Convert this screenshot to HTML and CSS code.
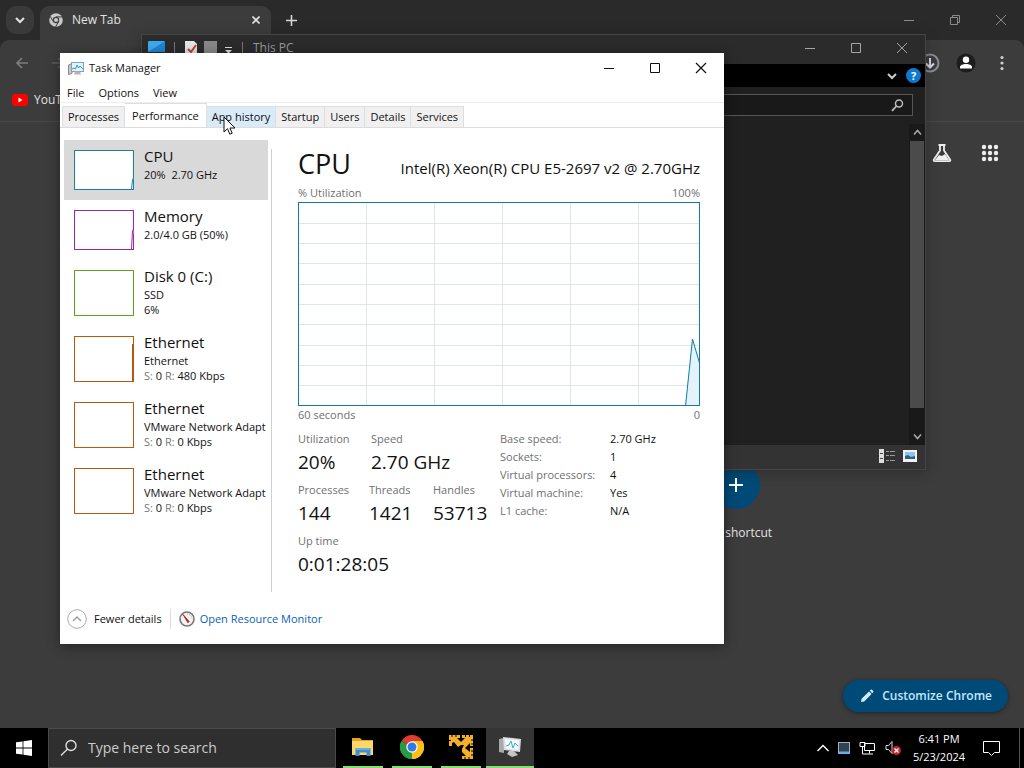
FILE: index.html
```html
<!DOCTYPE html>
<html lang="en">
<head>
<meta charset="utf-8">
<title>Task Manager</title>
<link rel="stylesheet" href="styles.css">
</head>
<body>
<div class="screen">
<div class="desktop">

<section class="chrome" aria-label="Browser">
  <header class="chrome-tabs">
    <button class="tab-search" aria-label="Search tabs"><svg width="10" height="8" viewBox="0 0 10 8"><path d="M1 2l4 4 4-4" fill="none" stroke="#e3e3e3" stroke-width="2"/></svg></button>
    <div class="chrome-tab">
      <svg width="14" height="14" viewBox="0 0 14 14"><circle cx="7" cy="7" r="6.8" fill="#c7c7c7"/><circle cx="7" cy="7" r="3.2" fill="#3c3c3c"/><circle cx="7" cy="7" r="2.1" fill="#c7c7c7"/><path d="M7 3.9h6.2M4.4 8.6L1.2 3.4M9.6 8.6L6.6 13.8" stroke="#3c3c3c"/></svg>
      <span class="chrome-tab-name">New Tab</span>
      <button class="tab-close" aria-label="Close tab"><svg width="8" height="8" viewBox="0 0 8 8"><path d="M.5.5l7 7M7.5.5l-7 7" stroke="#e3e3e3" stroke-width="1.6"/></svg></button>
    </div>
    <button class="tab-new" aria-label="New tab"><svg width="11" height="11" viewBox="0 0 11 11"><path d="M5.500 0v11M0 5.500h11" stroke="#d5d5d5" stroke-width="1.600"/></svg></button>
    <div class="win-buttons dim">
      <button aria-label="Minimize"><svg width="12" height="12" viewBox="0 0 12 12"><path d="M1 6.500h10" stroke="currentColor"/></svg></button>
      <button aria-label="Restore"><svg width="12" height="12" viewBox="0 0 12 12"><path d="M1.500 3.500h7v7h-7zM3.500 3.500v-2h7v7h-2" fill="none" stroke="currentColor"/></svg></button>
      <button aria-label="Close"><svg width="12" height="12" viewBox="0 0 12 12"><path d="M1 1l10 10M11 1L1 11" stroke="currentColor"/></svg></button>
    </div>
  </header>
  <div class="chrome-bar">
    <button aria-label="Back"><svg width="14" height="12" viewBox="0 0 14 12"><path d="M13 6H2M7 1L2 6l5 5" fill="none" stroke="#7c7c7c" stroke-width="1.700"/></svg></button>
    <button aria-label="Forward"><svg width="14" height="12" viewBox="0 0 14 12"><path d="M1 6h11M7 1l5 5-5 5" fill="none" stroke="#5c5c5c" stroke-width="1.700"/></svg></button>
    <div class="chrome-actions">
      <button aria-label="Downloads"><svg width="20" height="20" viewBox="0 0 20 20"><circle cx="10" cy="10" r="8.500" fill="none" stroke="#8d8d99" stroke-width="2"/><path d="M10 5v9M6 10.500l4 4 4-4" fill="none" stroke="#d7dcec" stroke-width="2"/></svg></button>
      <button aria-label="Profile"><svg width="20" height="20" viewBox="0 0 20 20"><circle cx="10" cy="10" r="9.500" fill="#1d1d1d"/><circle cx="10" cy="6.800" r="3.200" fill="#fff"/><path d="M4 15.500v-1.500c0-2 3-3 6-3s6 1 6 3v1.500z" fill="#fff"/></svg></button>
      <button aria-label="Menu"><svg width="20" height="20" viewBox="0 0 20 20"><g fill="#cfcfcf"><circle cx="10" cy="4.500" r="1.600"/><circle cx="10" cy="10" r="1.600"/><circle cx="10" cy="15.500" r="1.600"/></g></svg></button>
    </div>
  </div>
  <div class="bookmarks">
    <svg width="16" height="12" viewBox="0 0 16 12"><rect width="16" height="12" rx="3" fill="#f00"/><path d="M6.500 3.500v5l4-2.500z" fill="#fff"/></svg>
    <a href="#">YouT</a>
  </div>
  <main class="newtab">
    <div class="newtab-top">
      <button aria-label="Labs"><svg width="20" height="20" viewBox="0 0 20 20"><path d="M6.500 2h7M8 2.500v5L1.800 16.800q-.6 1.200 1 1.400h14.400q1.600-.2 1-1.400L12 7.500v-5" fill="none" stroke="#eee" stroke-width="1.800"/><path d="M3 17l4-5 3 1 3-2 4 6z" fill="#eee"/></svg></button>
      <button aria-label="Apps"><svg width="18" height="18" viewBox="0 0 18 18"><g fill="#eee"><circle cx="3" cy="3" r="2.200"/><circle cx="9" cy="3" r="2.200"/><circle cx="15" cy="3" r="2.200"/><circle cx="3" cy="9" r="2.200"/><circle cx="9" cy="9" r="2.200"/><circle cx="15" cy="9" r="2.200"/><circle cx="3" cy="15" r="2.200"/><circle cx="9" cy="15" r="2.200"/><circle cx="15" cy="15" r="2.200"/></g></svg></button>
    </div>
    <div class="shortcut">
      <button class="shortcut-add" aria-label="Add shortcut"><svg width="14" height="14" viewBox="0 0 14 14"><path d="M7 0v14M0 7h14" stroke="#fff" stroke-width="2"/></svg></button>
      <span>Add shortcut</span>
    </div>
    <button class="customize"><svg width="14" height="14" viewBox="0 0 14 14"><path d="M1 13l.6-3.200L9 2.400l2.600 2.600-7.400 7.400zM9.800 1.700l.9-.9q.7-.5 1.300 0l1.200 1.200q.6.600 0 1.300l-.9.900z" fill="#d3ecff"/></svg>Customize Chrome</button>
  </main>
</section>

<section class="explorer" aria-label="This PC">
  <header class="explorer-title">
    <div class="quick">
      <svg width="17" height="15" viewBox="0 0 17 15"><rect width="17" height="11" rx="1" fill="#3fa9ee"/><path d="M0 11L17 0v11z" fill="#1e86d4"/><path d="M4 13h9v2H4z" fill="#bbb"/></svg>
      <svg width="6" height="15" viewBox="0 0 6 15"><path d="M2.500 1v13" stroke="#777"/></svg>
      <svg width="12" height="15" viewBox="0 0 12 15"><path d="M0 0h9l3 3v12H0z" fill="#e6e6e6"/><path d="M3 8l3 3 5-7" fill="none" stroke="#c33f3f" stroke-width="2"/></svg>
      <svg width="13" height="15" viewBox="0 0 13 15"><path d="M0 0h13v15H0z" fill="#888"/></svg>
      <svg width="9" height="15" viewBox="0 0 9 15"><path d="M1 6.500h7" stroke="#ddd"/><path d="M1 9h7l-3.500 3.500z" fill="#ddd"/></svg>
      <svg width="6" height="15" viewBox="0 0 6 15"><path d="M2.500 1v13" stroke="#777"/></svg>
      <span>This PC</span>
    </div>
    <div class="win-buttons mid">
      <button aria-label="Minimize"><svg width="12" height="12" viewBox="0 0 12 12"><path d="M1 6.500h10" stroke="currentColor"/></svg></button>
      <button aria-label="Maximize"><svg width="12" height="12" viewBox="0 0 12 12"><path d="M1.500 1.500h9v9h-9z" fill="none" stroke="currentColor"/></svg></button>
      <button aria-label="Close"><svg width="12" height="12" viewBox="0 0 12 12"><path d="M1 1l10 10M11 1L1 11" stroke="currentColor"/></svg></button>
    </div>
  </header>
  <div class="explorer-ribbon">
    <svg width="10" height="8" viewBox="0 0 10 8"><path d="M1 2l4 4 4-4" fill="none" stroke="#ccc" stroke-width="2"/></svg>
    <button class="help" aria-label="Help">?</button>
  </div>
  <div class="explorer-search">
    <input type="search" aria-label="Search This PC">
    <svg width="13" height="13" viewBox="0 0 13 13"><circle cx="8" cy="4.500" r="3.500" fill="none" stroke="#bbb" stroke-width="1.500"/><path d="M5.500 7L1 11.800" stroke="#bbb" stroke-width="1.800"/></svg>
  </div>
  <div class="explorer-body">
    <div class="scroll">
      <svg width="9" height="7" viewBox="0 0 9 7"><path d="M1 5.500l3.500-4 3.500 4" fill="none" stroke="#aaa" stroke-width="1.500"/></svg>
      <div class="scroll-thumb"></div>
      <svg width="9" height="7" viewBox="0 0 9 7"><path d="M1 1.500l3.500 4 3.500-4" fill="none" stroke="#aaa" stroke-width="1.500"/></svg>
    </div>
  </div>
  <footer class="explorer-status">
    <svg width="17" height="14" viewBox="0 0 17 14"><path d="M0 0h5v14H0z" fill="#ddd"/><path d="M1 4.500h3M1 9.500h3" stroke="#444"/><path d="M7 2.500h3m1 0h5M7 6.500h3m1 0h5M7 11.500h3m1 0h5" stroke="#999"/></svg>
    <svg width="14" height="12" viewBox="0 0 14 12"><path d="M0 0h14v12H0z" fill="#f2f2f2"/><path d="M2 2h10v7H2z" fill="#8fc3ee"/><path d="M2 9V6l3-1 3 2 4-1v3z" fill="#2b6387"/></svg>
  </footer>
</section>

<section class="taskmgr" aria-label="Task Manager">
  <header class="tm-title">
    <svg width="16" height="15" viewBox="0 0 16 15"><path d="M.5 4L4 2.500v10L.5 13.500z" fill="#c8c8c8" stroke="#8b8b8b"/><rect x="3.500" y="1.500" width="12" height="9" fill="#e3f3fb" stroke="#8ba0ab"/><path d="M4 8l2-1 1.500 1L9 4l1.500 3L12 5l3 3" fill="none" stroke="#2f9bc9"/><path d="M7 10.500h5l1 3H6z" fill="#b5b5b5"/></svg>
    <h1>Task Manager</h1>
    <div class="win-buttons">
      <button aria-label="Minimize"><svg width="12" height="12" viewBox="0 0 12 12"><path d="M1 6.500h10" stroke="currentColor"/></svg></button>
      <button aria-label="Maximize"><svg width="12" height="12" viewBox="0 0 12 12"><path d="M1.500 1.500h9v9h-9z" fill="none" stroke="currentColor"/></svg></button>
      <button aria-label="Close"><svg width="12" height="12" viewBox="0 0 12 12"><path d="M1 1l10 10M11 1L1 11" stroke="currentColor" stroke-width="1.200"/></svg></button>
    </div>
  </header>
  <nav class="tm-menu"><button>File</button><button>Options</button><button>View</button></nav>
  <div class="tm-tabs" role="tablist">
    <button role="tab">Processes</button><button role="tab" class="selected" aria-selected="true">Performance</button><button role="tab" class="hover">App history</button><button role="tab">Startup</button><button role="tab">Users</button><button role="tab">Details</button><button role="tab">Services</button>
  </div>
  <div class="tm-body">
    <aside class="tm-side">
      <button class="res cpu active"><svg class="thumb short" viewBox="0 0 60 40"><rect x=".5" y=".5" width="59" height="39"/><path d="M57.500 39.500l1-10 1-2"/></svg><span class="res-text"><b>CPU</b><span>20%&nbsp; 2.70 GHz</span></span></button>
      <button class="res mem"><svg class="thumb short" viewBox="0 0 60 40"><rect x=".5" y=".5" width="59" height="39"/><path d="M57.500 39.500l1-19h1"/></svg><span class="res-text"><b>Memory</b><span>2.0/4.0 GB (50%)</span></span></button>
      <button class="res disk"><svg class="thumb" viewBox="0 0 60 46"><rect x=".5" y=".5" width="59" height="45"/></svg><span class="res-text"><b>Disk 0 (C:)</b><span>SSD</span><span>6%</span></span></button>
      <button class="res net"><svg class="thumb" viewBox="0 0 60 46"><rect x=".5" y=".5" width="59" height="45"/><path d="M58.500 45V8"/></svg><span class="res-text"><b>Ethernet</b><span>Ethernet</span><span><i>S:</i> 0 <i>R:</i> 480 Kbps</span></span></button>
      <button class="res net"><svg class="thumb" viewBox="0 0 60 46"><rect x=".5" y=".5" width="59" height="45"/></svg><span class="res-text"><b>Ethernet</b><span>VMware Network Adapt</span><span><i>S:</i> 0 <i>R:</i> 0 Kbps</span></span></button>
      <button class="res net"><svg class="thumb" viewBox="0 0 60 46"><rect x=".5" y=".5" width="59" height="45"/></svg><span class="res-text"><b>Ethernet</b><span>VMware Network Adapt</span><span><i>S:</i> 0 <i>R:</i> 0 Kbps</span></span></button>
    </aside>
    <div class="tm-main">
      <div class="head"><h2>CPU</h2><span>Intel(R) Xeon(R) CPU E5-2697 v2 @ 2.70GHz</span></div>
      <div class="axis"><span>% Utilization</span><span>100%</span></div>
      <svg class="graph" viewBox="0 0 400 202" preserveAspectRatio="none">
        <path class="grid" d="M67.500 0v202M135.500 0v202M203.500 0v202M271.500 0v202M339.500 0v202M0 20.500h400M0 40.500h400M0 60.500h400M0 81.500h400M0 101.500h400M0 121.500h400M0 142.500h400M0 162.500h400M0 182.500h400"/>
        <path class="plot" d="M386.500 203l7-67 7 24v43z"/>
      </svg>
      <div class="axis"><span>60 seconds</span><span>0</span></div>
      <div class="stats">
        <div class="live">
          <dl class="two"><div><dt>Utilization</dt><dd>20%</dd></div><div><dt>Speed</dt><dd>2.70 GHz</dd></div></dl>
          <dl class="three"><div><dt>Processes</dt><dd>144</dd></div><div><dt>Threads</dt><dd>1421</dd></div><div><dt>Handles</dt><dd>53713</dd></div></dl>
          <dl><div><dt>Up time</dt><dd>0:01:28:05</dd></div></dl>
        </div>
        <table class="specs">
          <tr><th>Base speed:</th><td>2.70 GHz</td></tr>
          <tr><th>Sockets:</th><td>1</td></tr>
          <tr><th>Virtual processors:</th><td>4</td></tr>
          <tr><th>Virtual machine:</th><td>Yes</td></tr>
          <tr><th>L1 cache:</th><td>N/A</td></tr>
        </table>
      </div>
    </div>
  </div>
  <footer class="tm-foot">
    <button class="fewer"><svg width="20" height="20" viewBox="0 0 20 20"><circle cx="10" cy="10" r="9.300" fill="none" stroke="#aaa"/><path d="M6 12l4-4 4 4" fill="none" stroke="#999" stroke-width="1.300"/></svg>Fewer details</button>
    <a class="monitor" href="#"><svg width="16" height="16" viewBox="0 0 16 16"><circle cx="8" cy="8" r="7" fill="#f4f4f4" stroke="#777" stroke-width="1.600"/><path d="M8 3a5 5 0 0 1 5 5" fill="none" stroke="#aaa" stroke-dasharray="1 1"/><path d="M4 3.500l6 7-1 1.200z" fill="#c00" stroke="#c0241c"/></svg>Open Resource Monitor</a>
  </footer>
</section>

<svg class="cursor" width="13" height="20" viewBox="0 0 13 20"><path d="M1 1v15l3.500-3.300 2.300 5.500 2.400-1-2.300-5.200H12z" fill="#fff" stroke="#111"/></svg>
</div>

<footer class="taskbar">
  <button class="start" aria-label="Start"><svg width="16" height="16" viewBox="0 0 16 16"><path d="M0 2.300l6.600-.9v6.200H0zM7.400 1.300L16 0v7.600H7.400zM0 8.400h6.600v6.200L0 13.700zM7.400 8.400H16V16l-8.600-1.200z" fill="#fff"/></svg></button>
  <label class="search"><svg width="18" height="18" viewBox="0 0 18 18"><circle cx="11" cy="6.500" r="5" fill="none" stroke="#ddd" stroke-width="1.400"/><path d="M7.300 10.200L1 16.500" stroke="#ddd" stroke-width="1.400"/></svg><input type="text" placeholder="Type here to search" aria-label="Type here to search"></label>
  <div class="apps">
    <button aria-label="File Explorer"><svg width="24" height="24" viewBox="0 0 24 24"><path d="M1 3h8l2 2h11v4H1z" fill="#e5a521"/><path d="M1 6h21v14H1z" fill="#ffd768"/><path d="M4.500 21v-8h15v8h-4v-3.500h-7V21z" fill="#3f8fd2"/><path d="M4.500 13h15v2h-15z" fill="#62afe8"/></svg></button>
    <button aria-label="Google Chrome"><svg width="24" height="24" viewBox="0 0 24 24"><path d="M12 12L1.600 6A12 12 0 0 1 22.400 6z" fill="#e33b2e"/><path d="M12 12l10.400-6A12 12 0 0 1 12 24z" fill="#fbc116"/><path d="M12 12v12A12 12 0 0 1 1.600 6z" fill="#269c47"/><path d="M12 6h10.400A12 12 0 0 1 12 24l5.200-9z" fill="#fbc116"/><path d="M1.600 6l5.200 9L12 18v6A12 12 0 0 1 1.600 6z" fill="#269c47"/><circle cx="12" cy="12" r="5.700" fill="#fff"/><circle cx="12" cy="12" r="4.500" fill="#3478e5"/></svg></button>
    <button aria-label="Virtual machine tools"><svg width="24" height="24" viewBox="0 0 24 24"><path d="M0 0h11v3H8l4 4 4-4h-3V0h11v11h-3V8l-5 5 5 4v-4h3v11H13v-3h4l-4-4v-3l2-4h-3L9 12 5 7 3 8v3H0z" fill="#f4b02a"/><path d="M3 0v2M7 0v2M0 5.500h2M16.500 0v2M20.500 0v2M24 5h-2M24 9h-2M24 16h-2M24 20h-2M16 24v-2M20 24v-2" stroke="#000"/></svg></button>
    <button class="current" aria-label="Task Manager"><svg width="24" height="24" viewBox="0 0 24 24"><path d="M1 4l5-1v15l-5-1z" fill="#aaa"/><path d="M5 2l18 2-1 13-16-2z" fill="#d9dfe2"/><path d="M7 4l14 1.500-1 9.500L8 13.500z" fill="#f4fbfd"/><path d="M8 11l3-1 2-4 2 7 2-5 3 3" fill="none" stroke="#48a9bd"/><path d="M11 16h5l4 4-6 2-5-3z" fill="#c4c4c4"/></svg></button>
  </div>
  <div class="tray">
    <svg width="12" height="8" viewBox="0 0 12 8"><path d="M.5 7L6 1.500 11.500 7" fill="none" stroke="#fff" stroke-width="1.400"/></svg>
    <svg width="12" height="12" viewBox="0 0 12 12"><rect x=".5" y=".5" width="11" height="11" fill="#34424e" stroke="#9fb0bd"/><path d="M1 10.500h10" stroke="#4ab0ff" stroke-width="2"/></svg>
    <svg width="17" height="15" viewBox="0 0 17 15"><path d="M5.500 2.500h10v7h-10zM10.500 9.500v3M6 13h8M1 1.500h5v4H1zM3.500 5.500V13H6" fill="none" stroke="#fff"/></svg>
    <svg width="17" height="16" viewBox="0 0 17 16"><path d="M1 5.500h2.500l3.500-4v12l-3.500-4H1z" fill="none" stroke="#ddd"/><circle cx="11.500" cy="10.500" r="4.500" fill="#c72232"/><path d="M9.500 8.500l4 4M13.500 8.500l-4 4" stroke="#fff" stroke-width="1.300"/></svg>
    <div class="clock"><span>6:41 PM</span><span>5/23/2024</span></div>
    <svg class="notice" width="17" height="17" viewBox="0 0 17 17"><path d="M.5 1.500h16v11h-5l-3 3-3-3h-5z" fill="none" stroke="#fff"/></svg>
  </div>
</footer>
</div>
</body>
</html>
```
FILE: styles.css
```css
* { box-sizing: border-box; }

body {
  margin: 0;
  font: 12px/16px "Open Sans", "Noto Sans", sans-serif;
  color: #111;
  background: #3c3c3c;
}

button {
  margin: 0;
  padding: 0;
  border: 0;
  background: none;
  font: inherit;
  color: inherit;
}

svg { display: block; flex: none; }

h1, h2, dl, dd { margin: 0; font-weight: 400; }

.screen { display: flex; flex-direction: column; height: 100vh; overflow: hidden; }
.desktop { position: relative; flex: 1; min-height: 0; overflow: hidden; }

.win-buttons { display: flex; align-self: stretch; margin-left: auto; }
.win-buttons button { display: flex; align-items: center; justify-content: center; width: 46px; }
.win-buttons.dim { color: #8c8c8c; }
.win-buttons.mid { padding-bottom: 3px; color: #a5a5a5; }

/* Browser */
.chrome { display: flex; flex-direction: column; height: 100%; color: #e3e3e3; background: #2a2a2a; }
.chrome-tabs { display: flex; align-items: center; height: 40px; }
.tab-search { display: flex; align-items: center; justify-content: center; width: 28px; height: 28px; margin: 0 6px; border-radius: 10px; background: #3a3a3a; }
.chrome-tab { display: flex; align-items: center; gap: 9px; align-self: flex-end; width: 231px; height: 34px; padding: 0 11px 6px 9px; border-radius: 9px 9px 0 0; background: #3c3c3c; }
.chrome-tab-name { flex: 1; }
.tab-new { margin-left: 15px; }
.chrome-bar { display: flex; align-items: center; gap: 22px; height: 42px; padding: 4px 12px 0 15px; border-radius: 9px 9px 0 0; background: #3c3c3c; }
.chrome-actions { display: flex; gap: 16px; margin-left: auto; }
.bookmarks { display: flex; align-items: center; gap: 6px; height: 40px; padding: 0 12px 4px; border-bottom: 1px solid #484848; background: #3c3c3c; }
.bookmarks a { color: inherit; text-decoration: none; }
.newtab { flex: 1; display: flex; flex-direction: column; align-items: flex-end; padding: 21px 16px 16px; background: #3c3c3c; }
.newtab-top { display: flex; align-items: center; gap: 29px; padding-right: 9px; }
.shortcut { display: flex; flex-direction: column; align-items: center; gap: 15px; width: 112px; margin: 298px 216px 0 0; line-height: 18px; white-space: nowrap; }
.shortcut-add { display: flex; align-items: center; justify-content: center; width: 48px; height: 48px; border-radius: 24px; background: #004a77; }
.customize { display: flex; align-items: center; gap: 8px; height: 32px; margin-top: auto; padding: 0 16px 0 17px; border-radius: 16px; font-weight: 600; color: #c2e7ff; background: #004a77; box-shadow: 0 1px 4px #222; }

/* File Explorer */
.explorer { position: absolute; top: 34px; left: 141px; right: 98px; bottom: 258px; display: flex; flex-direction: column; border: 1px solid #454545; color: #999; background: #202020; box-shadow: 0 2px 10px #2228; }
.explorer-title { display: flex; align-items: center; height: 29px; background: #2b2b2b; }
.quick { display: flex; align-items: center; gap: 7px; padding: 0 0 3px 6px; }
.explorer-ribbon { display: flex; align-items: center; justify-content: flex-end; gap: 9px; height: 23px; padding-right: 4px; background: #000; }
.help { width: 15px; height: 15px; border-radius: 8px; font-size: 11px; line-height: 15px; font-weight: 700; color: #fff; background: #0f78cf; }
.explorer-search { display: flex; align-items: center; height: 22px; margin: 7px 12px 8px 60px; padding-right: 8px; border: 1px solid #555; background: #191919; }
.explorer-search input { flex: 1; border: 0; outline: 0; background: none; }
.explorer-body { display: flex; flex: 1; justify-content: flex-end; min-height: 0; }
.scroll { display: flex; flex-direction: column; align-items: center; gap: 5px; width: 16px; padding: 5px 0; background: #191919; }
.scroll-thumb { flex: 1; width: 14px; margin-bottom: 20px; background: #4b4b4b; }
.explorer-status { display: flex; align-items: center; justify-content: flex-end; gap: 7px; height: 24px; padding: 0 8px 2px; background: #333; }

/* Task Manager */
.taskmgr { position: absolute; top: 53px; left: 60px; right: 300px; font-size: 11px; background: #fff; box-shadow: 0 2px 12px #0006; }
.tm-title { display: flex; align-items: center; gap: 5px; height: 30px; padding-left: 8px; }
.tm-title h1 { font-size: 11px; }
.tm-title .win-buttons { color: #111; }
.tm-menu { display: flex; gap: 14px; height: 20px; padding: 0 7px; border-bottom: 1px solid #eee; }
.tm-tabs { display: flex; align-items: flex-end; height: 25px; padding-left: 2px; border-bottom: 1px solid #dcdcdc; }
.tm-tabs button { height: 21px; padding: 0 5px; border: 1px solid #dedede; border-width: 1px 1px 0 0; background: #f0f0f0; }
.tm-tabs .selected { height: 24px; padding: 0 7px; background: #fff; }
.tm-tabs .hover { background: #d9ebf9; }
.tm-tabs button:first-child { border-left-width: 1px; }

.tm-body { display: grid; grid-template-columns: 212px 1fr; }
.tm-side { padding: 12px 0 68px 4px; overflow: hidden; background: linear-gradient(#d0d0d0, #d0d0d0) right 0 top 21px / 1px 100% no-repeat; }
.res { display: flex; gap: 10px; width: 204px; padding: 10px; text-align: left; }
.res.active { background: #d9d9d9; }
.thumb { width: 60px; height: 46px; fill: #fff; stroke: currentColor; }
.thumb.short { height: 40px; }
.cpu .thumb { color: #1c7fa6; }
.mem .thumb { color: #9528b4; }
.disk .thumb { color: #58a618; }
.net .thumb { color: #b25a12; }
.res-text { display: flex; flex-direction: column; height: 40px; margin-top: -4px; white-space: nowrap; line-height: 15px; }
.res-text b { font-size: 15px; font-weight: 400; line-height: 21px; }
.res-text i { font-style: normal; color: #777; }

.tm-main { padding: 18px 24px 0 26px; }
.head { display: flex; align-items: baseline; justify-content: space-between; height: 38px; line-height: 36px; white-space: nowrap; }
.head h2 { font-size: 27px; }
.head span { font-size: 15px; }
.axis { display: flex; justify-content: space-between; height: 18px; line-height: 18px; color: #707070; }
.graph { width: 100%; height: 204px; border: 1px solid #117d9b; }
.grid { fill: none; stroke: #dce6ec; }
.plot { fill: #e4f2fb; stroke: #117d9b; }
.stats { display: grid; grid-template-columns: 202px 1fr; padding-top: 6px; }
.live dl { display: grid; height: 51px; white-space: nowrap; }
.live .two { grid-template-columns: 73px 1fr; }
.live .three { grid-template-columns: 71px 64px 1fr; }
.live dt { line-height: 18px; color: #707070; }
.live dd { font-size: 19px; line-height: 28px; }
.specs { align-self: start; border-collapse: collapse; line-height: 18px; white-space: nowrap; }
.specs th { width: 110px; padding: 0; font-weight: 400; text-align: left; color: #707070; }
.specs td { padding: 0; }
.tm-foot { display: flex; align-items: center; height: 52px; padding: 2px 7px 0; }
.fewer { display: flex; align-items: center; gap: 7px; padding-right: 8px; border-right: 1px solid #ddd; line-height: 14px; }
.monitor { display: flex; align-items: center; gap: 5px; padding-left: 8px; font-size: 12px; color: #0a5fb8; text-decoration: none; }
.tm-foot .monitor { font-size: 11px; }
.cursor { position: absolute; top: 116px; left: 223px; }

/* Taskbar */
.taskbar { display: flex; height: 40px; color: #fff; background: #000; }
.start { display: flex; align-items: center; justify-content: center; width: 48px; }
.search { display: flex; flex: 0 1 288px; align-items: center; gap: 10px; padding-left: 11px; border: 1px solid #4a4a4a; background: #2f2f2f; }
.search input { flex: 1; min-width: 0; padding: 0; border: 0; outline: 0; background: none; font: 14px/20px "Open Sans", "Noto Sans", sans-serif; color: #ccc; }
.search input::placeholder { color: #ccc; opacity: 1; }
.apps { display: flex; gap: 9px; padding-left: 7px; }
.apps button { display: flex; align-items: center; justify-content: center; width: 40px; border-bottom: 2px solid #86dd70; }
.apps .current { width: 48px; margin-left: -4px; background: #353535; }
.tray { display: flex; align-items: center; gap: 9px; margin: 0 4px 0 auto; padding-right: 19px; border-right: 1px solid #555; }
.clock { display: flex; flex-direction: column; width: 56px; text-align: center; font-size: 11px; line-height: 18px; }
.notice { margin-left: 7px; }
```
